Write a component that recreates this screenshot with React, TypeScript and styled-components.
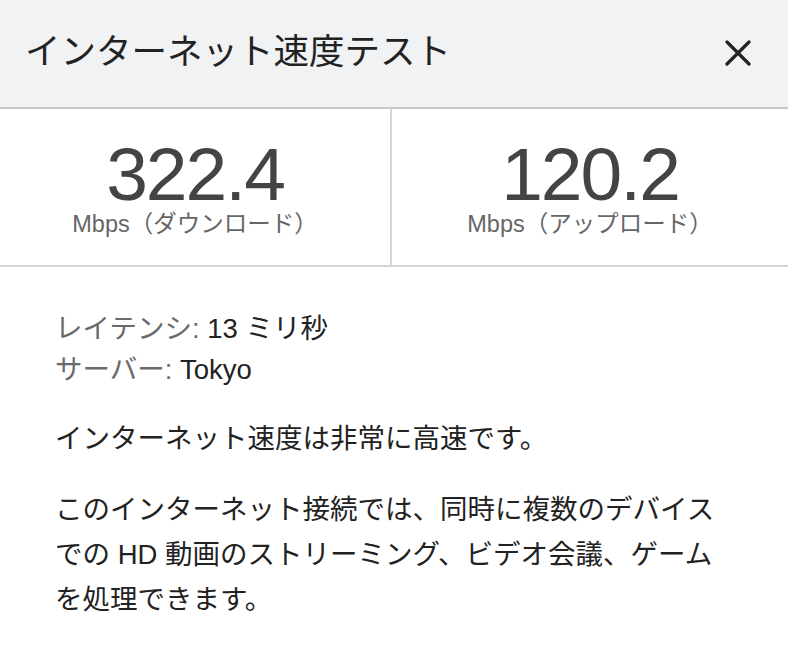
import React from "react";
import styled, { createGlobalStyle } from "styled-components";

const Global = createGlobalStyle`
  html, body { margin: 0; padding: 0; background: #ffffff; }
  body {
    font-family: "Liberation Sans", "Noto Sans CJK JP", sans-serif;
    color: #222222;
  }
`;

const Panel = styled.div`
  width: 788px;
  min-height: 648px;
  background: #ffffff;
`;

const Header = styled.header`
  height: 109px;
  box-sizing: border-box;
  display: flex;
  align-items: center;
  justify-content: space-between;
  padding: 0 37px 2px 25px;
  background: #f1f2f4;
  border-bottom: 2px solid #c9c9c9;
`;

const Title = styled.h1`
  margin: 0;
  font-size: 35.5px;
  font-weight: 400;
  color: #222222;
  line-height: 1;
`;

const CloseButton = styled.button`
  border: 0;
  background: transparent;
  padding: 0;
  width: 26px;
  height: 26px;
  display: flex;
  align-items: center;
  justify-content: center;
  color: #222222;
  cursor: pointer;
`;

const Stats = styled.section`
  display: grid;
  grid-template-columns: 392px 1fr;
  height: 158px;
  box-sizing: border-box;
  border-bottom: 2px solid #d4d4d4;
`;

const Stat = styled.div<{ $divider?: boolean }>`
  display: flex;
  flex-direction: column;
  align-items: center;
  justify-content: flex-start;
  padding-top: 27px;
  border-right: ${(p) => (p.$divider ? "2px solid #d4d4d4" : "none")};
`;

const Value = styled.div`
  font-size: 75px;
  line-height: 76px;
  letter-spacing: -2px;
  color: #444444;
`;

const Unit = styled.div`
  font-size: 23.5px;
  line-height: 24px;
  color: #666666;
`;

const Body = styled.section`
  padding: 41px 55px 30px 55px;
`;

const InfoList = styled.div`
  display: flex;
  flex-direction: column;
  font-size: 27.5px;
  line-height: 41px;
`;

const InfoRow = styled.div``;

const Label = styled.span`
  color: #6a6a6a;
`;

const InfoValue = styled.span`
  color: #222222;
`;

const Text = styled.p<{ $gap: number }>`
  margin: ${(p) => p.$gap}px 0 0 0;
  max-width: 672px;
  font-size: 27.5px;
  line-height: 45px;
  color: #222222;
`;

const CloseIcon = () => (
  <svg width="26" height="26" viewBox="0 0 26 26" fill="none">
    <path
      d="M2 2 L24 24 M24 2 L2 24"
      stroke="currentColor"
      strokeWidth="3.2"
      strokeLinecap="round"
    />
  </svg>
);

export default function App() {
  return (
    <Panel>
      <Global />
      <Header>
        <Title>インターネット速度テスト</Title>
        <CloseButton aria-label="閉じる">
          <CloseIcon />
        </CloseButton>
      </Header>
      <Stats>
        <Stat $divider>
          <Value>322.4</Value>
          <Unit>Mbps（ダウンロード）</Unit>
        </Stat>
        <Stat>
          <Value>120.2</Value>
          <Unit>Mbps（アップロード）</Unit>
        </Stat>
      </Stats>
      <Body>
        <InfoList>
          <InfoRow>
            <Label>レイテンシ: </Label>
            <InfoValue>13 ミリ秒</InfoValue>
          </InfoRow>
          <InfoRow>
            <Label>サーバー: </Label>
            <InfoValue>Tokyo</InfoValue>
          </InfoRow>
        </InfoList>
        <Text $gap={26}>インターネット速度は非常に高速です。</Text>
        <Text $gap={26}>
          このインターネット接続では、同時に複数のデバイスでの HD 動画のストリーミング、ビデオ会議、ゲームを処理できます。
        </Text>
      </Body>
    </Panel>
  );
}
